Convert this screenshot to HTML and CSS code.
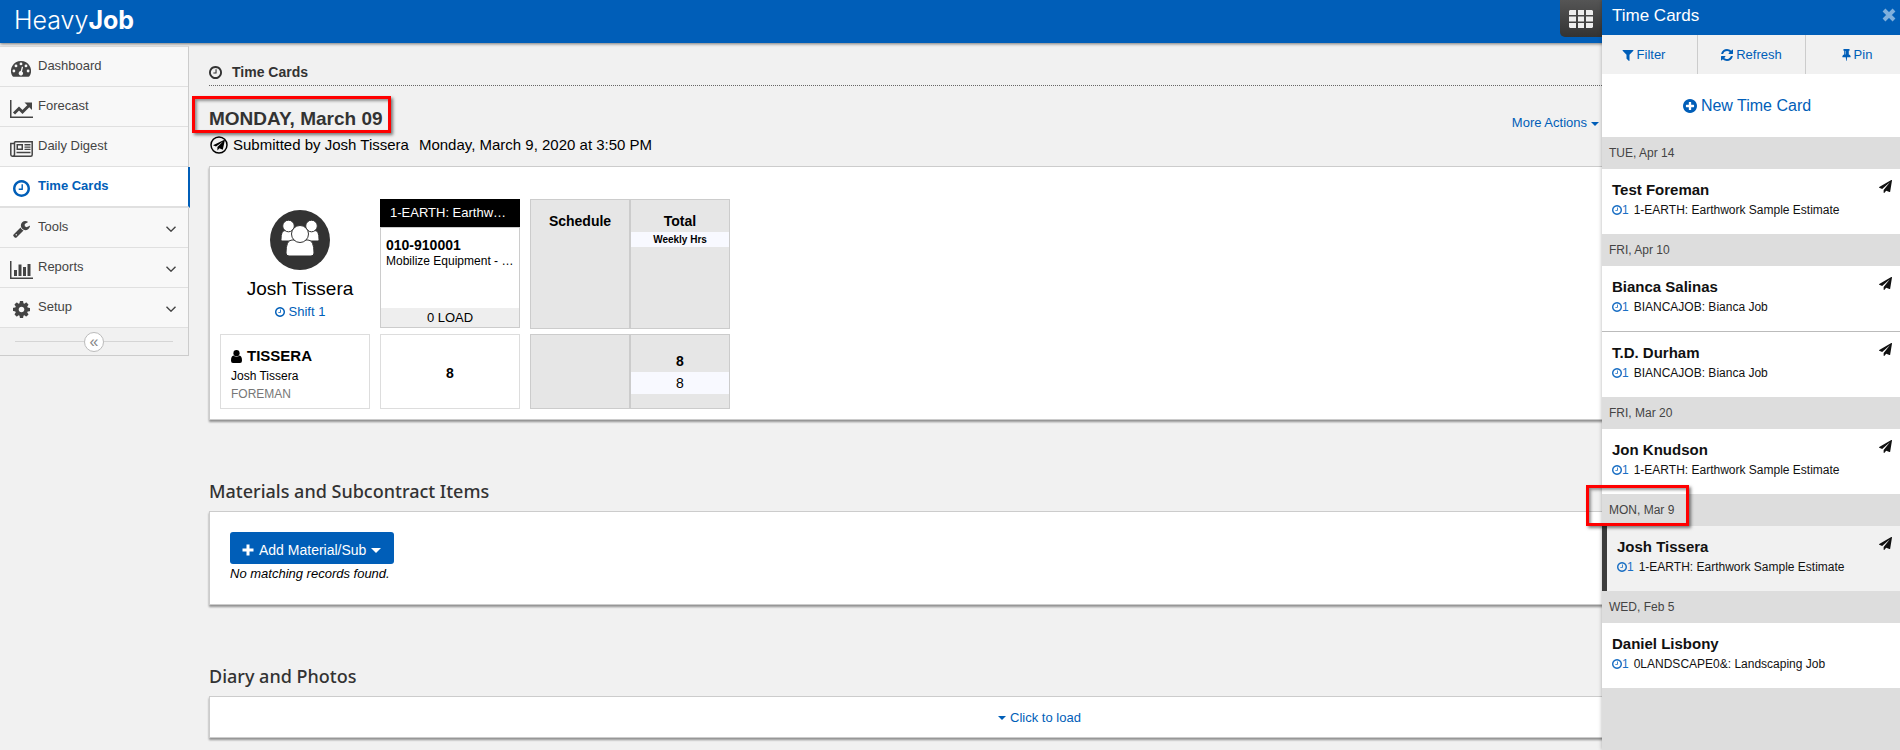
FILE: index.html
```html
<!DOCTYPE html>
<html lang="en">
<head>
    <meta charset="UTF-8">
    <meta name="viewport" content="width=device-width, initial-scale=1.0">
    <title>HeavyJob - Time Cards</title>
    <link rel="stylesheet" href="styles.css">
</head>
<body>
    <!-- Icon sprite -->
    <svg class="sprite" aria-hidden="true">
        <symbol id="i-clock" viewBox="0 128 1536 1536"><path d="M896 544v448q0 14-9 23t-23 9h-320q-14 0-23-9t-9-23v-64q0-14 9-23t23-9h224v-352q0-14 9-23t23-9h64q14 0 23 9t9 23zm416 352q0-148-73-273t-198-198-273-73-273 73-198 198-73 273 73 273 198 198 273 73 273-73 198-198 73-273zm224 0q0 209-103 385.500t-279.500 279.500-385.500 103-385.500-103-279.500-279.500-103-385.500 103-385.500 279.500-279.500 385.500-103 385.500 103 279.500 279.500 103 385.500z"/></symbol>
        <symbol id="i-plane" viewBox="0 0 1792 1792"><path d="M1764 11q33 24 27 64l-256 1536q-5 29-32 45-14 8-31 8-11 0-24-5l-453-185-242 295q-18 23-49 23-13 0-22-4-19-7-30.500-23.500t-11.500-36.500v-349l864-1059-1069 925-395-162q-37-14-40-55-2-40 32-59l1664-960q15-9 32-9 20 0 36 11z"/></symbol>
        <symbol id="i-filter" viewBox="128 128 1536 1536"><path d="M1595 295q17 41-14 70l-493 493v742q0 42-39 59-13 5-25 5-27 0-45-19l-256-256q-19-19-19-45v-486l-493-493q-31-29-14-70 17-39 59-39h1280q42 0 59 39z"/></symbol>
        <symbol id="i-refresh" viewBox="128 128 1536 1536"><path d="M1639 1056q0 5-1 7-64 268-268 434.500t-478 166.500q-146 0-282.500-55t-243.500-157l-129 129q-19 19-45 19t-45-19-19-45v-448q0-26 19-45t45-19h448q26 0 45 19t19 45-19 45l-137 137q71 66 161 102t187 36q134 0 250-65t186-179q11-17 53-117 8-23 30-23h192q13 0 22.500 9.500t9.500 22.500zm25-800v448q0 26-19 45t-45 19h-448q-26 0-45-19t-19-45 19-45l138-138q-148-137-349-137-134 0-250 65t-186 179q-11 17-53 117-8 23-30 23h-199q-13 0-22.500-9.500t-9.500-22.500v-7q65-268 270-434.500t480-166.500q146 0 284 55.500t245 156.500l130-129q19-19 45-19t45 19 19 45z"/></symbol>
        <symbol id="i-pin" viewBox="320 128 1152 1664"><path d="M800 864v-448q0-14-9-23t-23-9-23 9-9 23v448q0 14 9 23t23 9 23-9 9-23zm672 352q0 26-19 45t-45 19h-429l-51 483q-2 12-10.500 20.500t-20.500 8.500h-1q-27 0-32-27l-76-485h-404q-26 0-45-19t-19-45q0-123 78.500-221.500t177.500-98.500v-512q-52 0-90-38t-38-90 38-90 90-38h640q52 0 90 38t38 90-38 90-90 38v512q99 0 177.500 98.500t78.500 221.500z"/></symbol>
        <symbol id="i-plus-circle" viewBox="128 128 1536 1536"><path d="M1344 960v-128q0-26-19-45t-45-19h-256v-256q0-26-19-45t-45-19h-128q-26 0-45 19t-19 45v256h-256q-26 0-45 19t-19 45v128q0 26 19 45t45 19h256v256q0 26 19 45t45 19h128q26 0 45-19t19-45v-256h256q26 0 45-19t19-45zm320-64q0 209-103 385.500t-279.500 279.500-385.500 103-385.500-103-279.500-279.500-103-385.500 103-385.500 279.500-279.500 385.500-103 385.500 103 279.500 279.500 103 385.500z"/></symbol>
        <symbol id="i-cog" viewBox="128 128 1536 1536"><path d="M1152 896q0-106-75-181t-181-75-181 75-75 181 75 181 181 75 181-75 75-181zm512-109v222q0 12-8 23t-20 13l-185 28q-19 54-39 91 35 50 107 138 10 12 10 25t-9 23q-27 37-99 108t-94 71q-12 0-26-9l-138-108q-44 23-91 38-16 136-29 186-7 28-36 28h-222q-14 0-24.500-8.500t-11.500-21.500l-28-184q-49-16-90-37l-141 107q-10 9-25 9-14 0-25-11-126-114-165-168-7-10-7-23 0-12 8-23 15-21 51-66.500t54-70.500q-27-50-41-99l-183-27q-13-2-21-12.500t-8-23.500v-222q0-12 8-23t19-13l186-28q14-46 39-92-40-57-107-138-10-12-10-24 0-10 9-23 26-36 98.500-107.500t94.500-71.500q13 0 26 10l138 107q44-23 91-38 16-136 29-186 7-28 36-28h222q14 0 24.500 8.500t11.500 21.500l28 184q49 16 90 37l142-107q9-9 24-9 13 0 25 10 129 119 165 170 7 8 7 22 0 12-8 23-15 21-51 66.500t-54 70.500q26 50 41 98l183 28q13 2 21 12.500t8 23.500z"/></symbol>
        <symbol id="i-wrench" viewBox="64 128 1664 1664"><path d="M448 1472q0-26-19-45t-45-19-45 19-19 45 19 45 45 19 45-19 19-45zm644-420l-682 682q-37 37-90 37-52 0-91-37l-106-108q-38-36-38-90 0-53 38-91l681-681q39 98 114.500 173.500t173.500 114.500zm634-435q0 39-23 106-47 134-164.500 217.500t-258.500 83.500q-185 0-316.500-131.500t-131.500-316.500 131.500-316.500 316.500-131.500q58 0 121.500 16.500t107.500 46.500q16 11 16 28t-16 28l-293 169v224l193 107q5-3 79-48.500t135.500-81 70.500-35.500q15 0 23.500 10t8.500 25z"/></symbol>
        <symbol id="i-dashboard" viewBox="0 0 20 16"><path fill-rule="evenodd" d="M10 0a10 10 0 0 1 8.600 15.100q-.4.700-1.100.700H2.500q-.7 0-1.100-.7A10 10 0 0 1 10 0zM10 1.500a1.400 1.400 0 1 0 0 2.800 1.400 1.400 0 0 0 0-2.800zM5 3.500a1.400 1.400 0 1 0 0 2.800 1.400 1.400 0 0 0 0-2.800zM15 3.500a1.400 1.400 0 1 0 0 2.800 1.400 1.400 0 0 0 0-2.800zM2.900 8.600a1.400 1.400 0 1 0 0 2.800 1.400 1.400 0 0 0 0-2.800zM17.100 8.600a1.400 1.400 0 1 0 0 2.800 1.400 1.400 0 0 0 0-2.800zM10.900 5.600l-1.200 4.500a2.200 2.200 0 1 0 1.300.3l1.100-4.400z"/></symbol>
        <symbol id="i-line-chart" viewBox="0 0 23 18"><path d="M0 0h1.500v16.500H23V18H0z"/><path d="M4 13.500l5-5 3.500 3.500 6.500-6.500" fill="none" stroke="currentColor" stroke-width="3"/><path d="M14.500 2.500H22V10z"/></symbol>
        <symbol id="i-bar-chart" viewBox="0 0 23 18"><path d="M0 0h1.500v16.500H23V18H0zM4 9h3v6H4zM8.500 3.500h3V15h-3zM13 6h3v9h-3zM17.500 3h3v12h-3z"/></symbol>
        <symbol id="i-news" viewBox="0 0 23 16"><path fill="none" stroke="currentColor" stroke-width="1.500" d="M4.500.8h17.700v12.900q0 1.500-1.500 1.500H2.300Q.8 15.200.8 13.500V2.500h3.500M4.500.8v12.400q0 2-2 2"/><path fill-rule="evenodd" d="M6.500 3h6.500v6H6.500zM8 4.500v3h3.500v-3zM14.500 3h6v1.400h-6zM14.500 5.400h6v1.400h-6zM14.500 7.700h6v1.400h-6zM6.500 10.800h14v1.400h-14z"/></symbol>
        <symbol id="i-chevron" viewBox="0 0 10 6"><path d="M.5.700L5 5.200 9.500.7" fill="none" stroke="currentColor" stroke-width="1.400"/></symbol>
        <symbol id="i-caret" viewBox="0 0 8 4"><path d="M0 0h8L4 4z"/></symbol>
        <symbol id="i-plus" viewBox="0 0 12 12"><path d="M4.500.5h3v4h4v3h-4v4h-3v-4h-4v-3h4z"/></symbol>
        <symbol id="i-times" viewBox="0 0 14 14"><path d="M2 2l10 10M12 2L2 12" stroke="currentColor" stroke-width="4"/></symbol>
        <symbol id="i-grid" viewBox="0 0 24 18"><path d="M1 0h6v5H0V1zM9 0h6v5H9zM17 0h6l1 1v4h-7zM0 6.500h7v5H0zM9 6.500h6v5H9zM17 6.500h7v5h-7zM0 13h7v5H1l-1-1zM9 13h6v5H9zM17 13h7v4l-1 1h-6z"/></symbol>
        <symbol id="i-user" viewBox="0 0 11 13"><circle cx="5.500" cy="3.200" r="3.100"/><path d="M2.600 5.600a4 4 0 0 0 5.800 0Q11 6 11 10.800q0 2.200-2 2.200H2q-2 0-2-2.200Q0 6 2.600 5.600z"/></symbol>
        <symbol id="i-submitted" viewBox="0 0 18 18"><circle cx="9" cy="9" r="8" fill="none" stroke="currentColor" stroke-width="1.500"/><path d="M15 3.500l-2.200 10.300-3.400-1.600-2 2.300v-3.600L13 5.500l-7 5-3-1.200z"/></symbol>
        <symbol id="i-crew" viewBox="0 0 60 60"><circle cx="30" cy="30" r="30" fill="#333"/><g fill="#fff" stroke="#333" stroke-width="1"><path d="M11 29.500q0-9 4-9h7q4 0 4 5v5.500H12q-1 0-1-1.500zM49 29.500q0-9-4-9h-7q-4 0-4 5v5.500h14q1 0 1-1.500z"/><circle cx="18.500" cy="16" r="5.800"/><circle cx="41.500" cy="16" r="5.800"/><path d="M16 43q0-13 6-13h16q6 0 6 13 0 3-3 3H19q-3 0-3-3z"/><circle cx="30" cy="24" r="8.500"/></g></symbol>
    </svg>

    <header class="topbar">
        <div class="logo">Heavy<b>Job</b></div>
        <button class="apps-btn" aria-label="Apps"><svg class="icon icon-grid"><use href="#i-grid"/></svg></button>
    </header>

    <div class="layout">
        <nav class="sidebar">
            <a href="#"><svg class="icon nav-icon nav-dash"><use href="#i-dashboard"/></svg><span>Dashboard</span></a>
            <a href="#"><svg class="icon nav-icon nav-wide"><use href="#i-line-chart"/></svg><span>Forecast</span></a>
            <a href="#"><svg class="icon nav-icon nav-news"><use href="#i-news"/></svg><span>Daily Digest</span></a>
            <a href="#" class="active"><svg class="icon nav-icon"><use href="#i-clock"/></svg><span>Time Cards</span></a>
            <a href="#"><svg class="icon nav-icon"><use href="#i-wrench"/></svg><span>Tools</span><svg class="icon chevron"><use href="#i-chevron"/></svg></a>
            <a href="#"><svg class="icon nav-icon nav-wide"><use href="#i-bar-chart"/></svg><span>Reports</span><svg class="icon chevron"><use href="#i-chevron"/></svg></a>
            <a href="#"><svg class="icon nav-icon"><use href="#i-cog"/></svg><span>Setup</span><svg class="icon chevron"><use href="#i-chevron"/></svg></a>
            <div class="collapse"><button aria-label="Collapse menu">«</button></div>
        </nav>

        <main class="main">
            <h1 class="page-title"><svg class="icon icon-13"><use href="#i-clock"/></svg>Time Cards</h1>

            <div class="card-head">
                <div>
                    <h2 class="card-date"><span class="highlight highlight-date">MONDAY, March 09</span></h2>
                    <p class="submitted"><svg class="icon icon-18"><use href="#i-submitted"/></svg><span>Submitted by Josh Tissera</span><span class="submitted-at">Monday, March 9, 2020 at 3:50 PM</span></p>
                </div>
                <button class="link-btn">More Actions <svg class="icon caret"><use href="#i-caret"/></svg></button>
            </div>

            <section class="panel crew-panel">
                <table class="crew">
                    <tr class="crew-top">
                        <th class="col-crew">
                            <svg class="icon icon-crew"><use href="#i-crew"/></svg>
                            <div class="crew-name">Josh Tissera</div>
                            <a href="#" class="shift"><svg class="icon icon-10"><use href="#i-clock"/></svg>Shift 1</a>
                        </th>
                        <th class="col-job">
                            <div class="job-name">1-EARTH: Earthwork Sample</div>
                            <div class="job-box">
                                <div class="job-code">010-910001</div>
                                <div class="job-desc">Mobilize Equipment - Earth</div>
                                <div class="job-load">0 LOAD</div>
                            </div>
                        </th>
                        <th class="col-sum">Schedule</th>
                        <th class="col-sum">Total<div class="weekly">Weekly Hrs</div></th>
                    </tr>
                    <tr class="crew-row">
                        <td class="col-crew employee">
                            <div class="emp-code"><svg class="icon icon-user"><use href="#i-user"/></svg>TISSERA</div>
                            <div class="emp-name">Josh Tissera</div>
                            <div class="emp-role">FOREMAN</div>
                        </td>
                        <td class="col-job hours">8</td>
                        <td class="col-sum"></td>
                        <td class="col-sum"><b>8</b><div class="weekly-total">8</div></td>
                    </tr>
                </table>
            </section>

            <h3 class="section-title">Materials and Subcontract Items</h3>
            <section class="panel materials">
                <button class="btn-primary"><svg class="icon icon-12"><use href="#i-plus"/></svg>Add Material/Sub<svg class="icon caret caret-lg"><use href="#i-caret"/></svg></button>
                <p class="empty">No matching records found.</p>
            </section>

            <h3 class="section-title">Diary and Photos</h3>
            <section class="panel diary">
                <button class="link-btn"><svg class="icon caret"><use href="#i-caret"/></svg> Click to load</button>
            </section>
        </main>
    </div>

    <aside class="drawer">
        <div class="drawer-head">
            <span>Time Cards</span>
            <button class="close-btn" aria-label="Close"><svg class="icon icon-14"><use href="#i-times"/></svg></button>
        </div>
        <div class="drawer-tools">
            <button><svg class="icon icon-12"><use href="#i-filter"/></svg>Filter</button>
            <button><svg class="icon icon-12"><use href="#i-refresh"/></svg>Refresh</button>
            <button><svg class="icon icon-pin"><use href="#i-pin"/></svg>Pin</button>
        </div>
        <button class="new-card"><svg class="icon icon-14"><use href="#i-plus-circle"/></svg>New Time Card</button>

        <div class="day">TUE, Apr 14</div>
        <a href="#" class="entry">
            <strong>Test Foreman</strong><svg class="icon sent"><use href="#i-plane"/></svg>
            <span class="entry-job"><span class="count"><svg class="icon icon-10"><use href="#i-clock"/></svg>1</span>1-EARTH: Earthwork Sample Estimate</span>
        </a>
        <div class="day">FRI, Apr 10</div>
        <a href="#" class="entry">
            <strong>Bianca Salinas</strong><svg class="icon sent"><use href="#i-plane"/></svg>
            <span class="entry-job"><span class="count"><svg class="icon icon-10"><use href="#i-clock"/></svg>1</span>BIANCAJOB: Bianca Job</span>
        </a>
        <a href="#" class="entry">
            <strong>T.D. Durham</strong><svg class="icon sent"><use href="#i-plane"/></svg>
            <span class="entry-job"><span class="count"><svg class="icon icon-10"><use href="#i-clock"/></svg>1</span>BIANCAJOB: Bianca Job</span>
        </a>
        <div class="day">FRI, Mar 20</div>
        <a href="#" class="entry">
            <strong>Jon Knudson</strong><svg class="icon sent"><use href="#i-plane"/></svg>
            <span class="entry-job"><span class="count"><svg class="icon icon-10"><use href="#i-clock"/></svg>1</span>1-EARTH: Earthwork Sample Estimate</span>
        </a>
        <div class="day"><span class="highlight highlight-day">MON, Mar 9</span></div>
        <a href="#" class="entry selected">
            <strong>Josh Tissera</strong><svg class="icon sent"><use href="#i-plane"/></svg>
            <span class="entry-job"><span class="count"><svg class="icon icon-10"><use href="#i-clock"/></svg>1</span>1-EARTH: Earthwork Sample Estimate</span>
        </a>
        <div class="day">WED, Feb 5</div>
        <a href="#" class="entry">
            <strong>Daniel Lisbony</strong>
            <span class="entry-job"><span class="count"><svg class="icon icon-10"><use href="#i-clock"/></svg>1</span>0LANDSCAPE0&amp;: Landscaping Job</span>
        </a>
    </aside>
</body>
</html>
```

FILE: styles.css
```css
* {
    margin: 0;
    padding: 0;
    box-sizing: border-box;
}

body {
    font-family: "Liberation Sans", Arial, sans-serif;
    font-size: 13px;
    color: #000;
    background: #f1f1f1;
    min-height: 100vh;
}

button {
    font: inherit;
    color: inherit;
    background: none;
    border: none;
    cursor: pointer;
}

a {
    text-decoration: none;
    color: #005eb8;
}

.sprite {
    position: absolute;
    width: 0;
    height: 0;
}

/* Icons */
.icon {
    fill: currentColor;
    flex: none;
}

.icon-10 { width: 10px; height: 10px; }
.icon-12 { width: 12px; height: 12px; }
.icon-13 { width: 13px; height: 13px; }
.icon-14 { width: 14px; height: 14px; }
.icon-18 { width: 18px; height: 18px; }
.icon-grid { width: 24px; height: 18px; }
.icon-pin { width: 9px; height: 12px; }
.icon-user { width: 11px; height: 13px; }
.icon-crew { width: 60px; height: 60px; }
.caret { width: 8px; height: 4px; margin-top: 2px; }
.caret-lg { width: 10px; height: 5px; }

/* Top bar */
.topbar {
    display: flex;
    justify-content: space-between;
    align-items: flex-start;
    height: 43px;
    padding: 0 298px 0 14px;
    background: #005eb8;
    color: #fff;
    box-shadow: 0 1px 3px rgba(0,0,0,0.5);
    position: relative;
}

.logo {
    font-family: Inter, sans-serif;
    font-size: 25px;
    font-weight: 300;
    line-height: 40px;
}

.logo b {
    font-weight: 700;
}

.apps-btn {
    display: flex;
    align-items: center;
    justify-content: center;
    width: 42px;
    height: 37px;
    color: #eee;
    background: linear-gradient(#555, #333);
    border-radius: 0 0 0 5px;
}

.layout {
    display: flex;
    align-items: flex-start;
}

/* Left menu */
.sidebar {
    width: 189px;
    flex: none;
    margin-top: 3px;
    border-right: 1px solid #ccc;
    border-top: 1px solid #e0e0e0;
}

.sidebar a {
    display: flex;
    align-items: center;
    height: 40px;
    padding: 0 12px 0 10px;
    color: #444;
    background: #f8f8f8;
    border-bottom: 1px solid #e0e0e0;
}

.sidebar a span {
    flex: 1;
    padding-bottom: 3px;
}

.sidebar a.active {
    height: 41px;
    margin-right: -2px;
    color: #005eb8;
    background: #fff;
    font-weight: bold;
    border-right: 2px solid #005eb8;
    border-bottom-width: 2px;
}

.nav-icon {
    width: 17px;
    height: 17px;
    margin: 4px 8px 0 3px;
}

.nav-dash {
    width: 20px;
    height: 16px;
    margin: 4px 7px 0 1px;
}

.nav-wide {
    width: 23px;
    height: 18px;
    margin: 4px 5px 0 0;
}

.nav-news {
    width: 23px;
    height: 16px;
    margin: 4px 5px 0 0;
}

.chevron {
    width: 10px;
    height: 6px;
    margin-top: 2px;
}

.collapse {
    display: flex;
    align-items: center;
    height: 28px;
    padding: 0 15px;
    border-bottom: 1px solid #ccc;
}

.collapse::before,
.collapse::after {
    content: "";
    flex: 1;
    height: 1px;
    background: #d5d5d5;
}

.collapse button {
    width: 20px;
    height: 20px;
    font-size: 16px;
    line-height: 14px;
    color: #888;
    background: #fff;
    border: 1px solid #bbb;
    border-radius: 50%;
}

/* Main content */
.main {
    flex: 1;
    padding: 16px 30px 12px 20px;
}

.page-title {
    display: flex;
    align-items: center;
    gap: 10px;
    height: 27px;
    font-size: 14px;
    color: #333;
    border-bottom: 1px dotted #666;
}

.card-head {
    display: flex;
    justify-content: space-between;
    align-items: flex-start;
    padding: 21px 271px 0 0;
    height: 80px;
}

.card-head .link-btn {
    margin-top: 8px;
}

.card-date {
    font-size: 19px;
    line-height: 24px;
    color: #333;
}

.submitted {
    display: flex;
    align-items: center;
    gap: 5px;
    padding-left: 1px;
    font-size: 15px;
    line-height: 27px;
}

.submitted-at {
    margin-left: 5px;
}

.link-btn {
    display: inline-flex;
    align-items: center;
    gap: 4px;
    color: #005eb8;
}

.panel {
    background: #fff;
    border: 1px solid #ccc;
    box-shadow: 0 2px 2px rgba(0,0,0,0.4);
}

/* Red call-out boxes */
.highlight {
    position: relative;
}

.highlight::after {
    content: "";
    position: absolute;
    border: 3px solid #f00;
    box-shadow: 2px 2px 3px rgba(0,0,0,0.5), inset 2px 2px 3px rgba(0,0,0,0.4);
}

.highlight-date::after {
    inset: -12px -8px -4px -17px;
}

.highlight-day::after {
    inset: -18px -15px -9px -23px;
}

/* Crew time card */
.crew-panel {
    padding: 32px 10px 10px;
}

.crew,
.crew tbody {
    display: block;
}

.crew tr {
    display: flex;
}

.crew-top {
    height: 130px;
    margin-bottom: 5px;
}

.crew-row {
    height: 75px;
}

.col-crew {
    width: 150px;
    margin-right: 10px;
}

.col-job {
    width: 140px;
    margin-right: 10px;
}

.crew-top .col-crew {
    padding: 11px 8px 0 18px;
    font-weight: normal;
}

.crew-name {
    margin-top: 4px;
    font-size: 19px;
    line-height: 24px;
}

.shift {
    display: inline-flex;
    align-items: center;
    gap: 4px;
    line-height: 22px;
}

.job-name {
    height: 28px;
    padding: 0 10px;
    line-height: 27px;
    font-weight: normal;
    color: #fff;
    background: #000;
    overflow: hidden;
    text-overflow: ellipsis;
    white-space: nowrap;
}

.job-box {
    display: flex;
    flex-direction: column;
    height: 101px;
    padding-top: 8px;
    text-align: left;
    border: 1px solid #ccc;
}

.job-code {
    padding: 0 5px;
    font-size: 14px;
    line-height: 18px;
}

.job-desc {
    padding: 0 5px;
    font-size: 12px;
    font-weight: normal;
    line-height: 14px;
    overflow: hidden;
    text-overflow: ellipsis;
    white-space: nowrap;
}

.job-load {
    margin-top: auto;
    font-weight: normal;
    line-height: 19px;
    text-align: center;
    background: #eee;
}

.col-sum {
    width: 100px;
    font-size: 14px;
    text-align: center;
    background: #e6e6e6;
    border: 1px solid #ccc;
}

.crew-top .col-sum {
    padding-top: 11px;
    line-height: 21px;
}

.crew-top .weekly {
    font-size: 10px;
    line-height: 15px;
    background: #f8f9ff;
}

.employee {
    padding: 12px 10px 0;
    border: 1px solid #ddd;
}

.emp-code {
    display: flex;
    align-items: center;
    gap: 5px;
    font-size: 15px;
    font-weight: bold;
    line-height: 18px;
}

.emp-name {
    font-size: 12px;
    line-height: 22px;
}

.emp-role {
    font-size: 12px;
    line-height: 14px;
    color: #777;
}

.hours {
    display: flex;
    align-items: center;
    justify-content: center;
    padding-top: 3px;
    font-size: 14px;
    font-weight: bold;
    border: 1px solid #ddd;
}

.crew-row .col-sum {
    padding-top: 15px;
    line-height: 22px;
}

.weekly-total {
    background: #f8f9ff;
}

.section-title {
    margin-top: 57px;
    font-family: "Noto Sans", "Open Sans", sans-serif;
    font-size: 18px;
    font-weight: 500;
    line-height: 28px;
    color: #333;
    margin-bottom: 6px;
}

.materials {
    height: 94px;
    padding: 20px;
}

.btn-primary {
    display: inline-flex;
    align-items: center;
    gap: 5px;
    height: 32px;
    padding: 3px 13px 0 12px;
    font-size: 14px;
    color: #fff;
    background: #005eb8;
    border-radius: 3px;
}

.empty {
    font-size: 13px;
    font-style: italic;
    line-height: 20px;
}

.diary {
    display: flex;
    justify-content: center;
    height: 42px;
}

/* Time card drawer */
.drawer {
    position: fixed;
    top: 0;
    right: 0;
    bottom: 0;
    width: 298px;
    background: #ddd;
    box-shadow: 0 0 4px rgba(0,0,0,0.3);
}

.drawer-head {
    display: flex;
    justify-content: space-between;
    height: 35px;
    padding: 0 4px 5px 10px;
    font-size: 17px;
    line-height: 31px;
    color: #fff;
    background: #005eb8;
}

.close-btn {
    display: flex;
    align-items: center;
    color: #7fafdc;
}

.drawer-tools {
    display: grid;
    grid-template-columns: 96px 108px 1fr;
    height: 39px;
    background: #f1f1f1;
}

.drawer-tools button {
    display: flex;
    align-items: center;
    justify-content: center;
    gap: 3px;
    color: #005eb8;
    border-right: 1px solid #ccc;
}

.drawer-tools button:first-child {
    padding-right: 12px;
}

.drawer-tools button:last-child {
    border-right: none;
    padding-left: 8px;
}

.new-card {
    display: flex;
    align-items: center;
    justify-content: center;
    gap: 4px;
    width: 100%;
    height: 63px;
    padding-right: 8px;
    font-size: 16px;
    color: #005eb8;
    background: #fff;
}

.day {
    padding-left: 7px;
    font-size: 12px;
    line-height: 32px;
    color: #444;
    background: #ddd;
}

.entry {
    display: grid;
    grid-template-columns: 1fr auto;
    align-content: start;
    height: 65px;
    padding: 11px 8px 0 10px;
    color: #111;
    background: #fff;
}

.entry + .entry {
    height: 66px;
    border-top: 1px solid #bbb;
}

.entry strong {
    font-size: 15px;
    line-height: 20px;
}

.entry-job {
    display: flex;
    grid-column: 1 / -1;
    gap: 5px;
    font-size: 12px;
    line-height: 20px;
}

.count {
    display: flex;
    align-items: center;
    color: #1a6fc4;
}

.sent {
    width: 13px;
    height: 13px;
}

.selected {
    background: #f1f1f1;
    border-left: 5px solid #3c3c3c;
}
```
